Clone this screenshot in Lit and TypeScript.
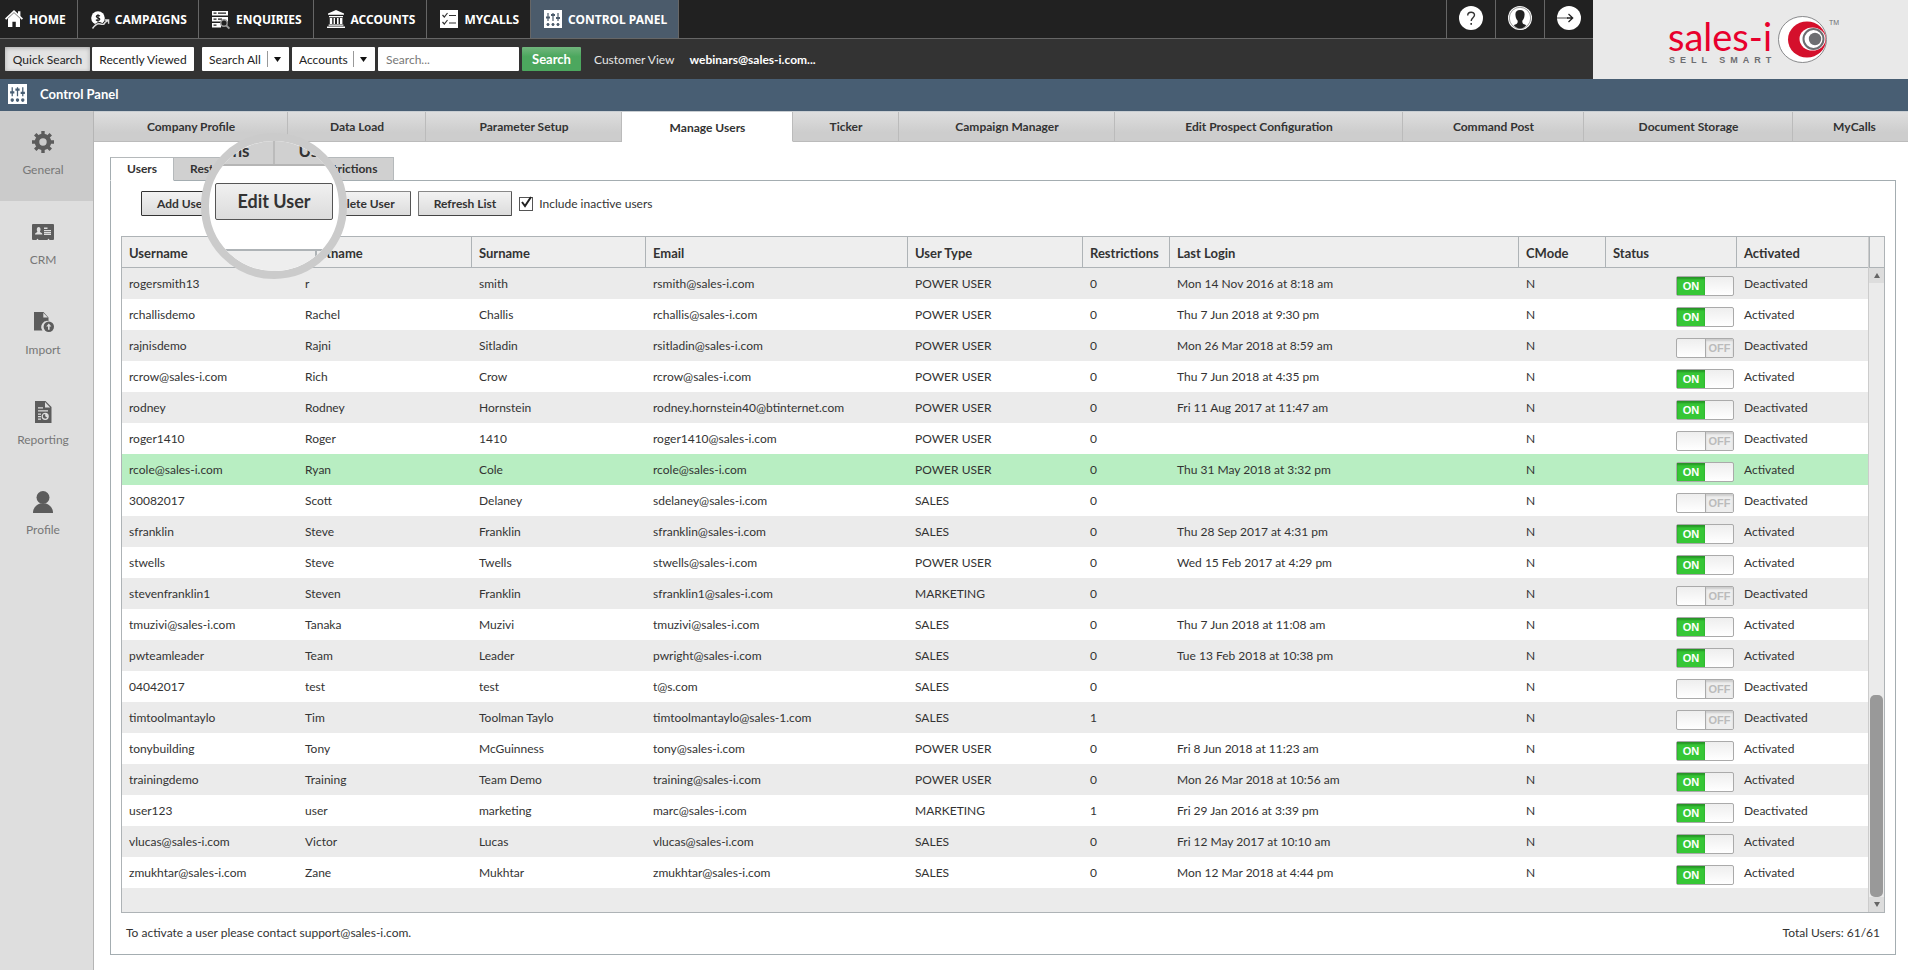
import { LitElement, html, css, svg } from "lit";
import { customElement } from "lit/decorators.js";
import { classMap } from "lit/directives/class-map.js";
import { styleMap } from "lit/directives/style-map.js";

const sliders = svg`
  <rect width="18" height="18" fill="#fff"/>
  <g class="ink"><path d="M4 3v8M9 3v8M14 3v8" stroke-width="1.2" fill="none"/>
  <path d="M2 7.5h4M7 5h4M12 8h4" stroke-width="2" fill="none"/>
  <circle cx="4" cy="14.5" r="1.1"/><circle cx="9" cy="14.5" r="1.1"/><circle cx="14" cy="14.5" r="1.1"/></g>`;

const navIcons: Record<string, unknown> = {
  home: svg`<path fill="#fff" d="M9 0L0 8.4l1.2 1.4L3 8.2V17h4.4v-5.2h3.4V17H15V8.2l1.8 1.6L18 8.4l-2.6-2.5V1.2H13v2.5z"/><path d="M2.600 8.600L9 2.600l6.400 6" fill="none" stroke="#212121" stroke-width=".6"/>`,
  campaigns: svg`<circle cx="7" cy="8" r="6.800" fill="#fff"/><path fill="none" stroke="#212121" stroke-width="1.200" d="M8.800 6.200C8.300 5 5.300 4.900 5.300 6.500S8.800 7.700 8.800 9.300 5.700 10.800 5 9.600M7 4.200v7.600"/><path fill="none" stroke="#212121" stroke-width="3" d="M4 16.500c2-3 4.500-3.500 6-2.500 2 1 3.500.5 4-1.500"/><path fill="none" stroke="#ddd" stroke-width="1.400" d="M1.500 18.500c3-4.500 5.500-5.500 8-4.500 2.500.8 4 .3 4.500-1.500l3.200-2.200M13.800 10h3.800v3.800"/>`,
  enquiries: svg`<path fill="#fff" d="M0 1h16v4.500H0zM0 7h16v4.500H0zM0 13h9v4.500H0z"/><path stroke="#212121" stroke-width="1.200" d="M1.500 3.200h3M6 3.200h8M1.500 9.200h3M6 9.200h4M1.500 15.200h3"/><circle cx="12" cy="13" r="3.200" fill="#212121" stroke="#999" stroke-width="1.400"/><path stroke="#999" stroke-width="2" d="M14.400 15.600l3 3"/>`,
  accounts: svg`<path fill="#fff" d="M9 0l8 3.600v1.200H1V3.600zM2 6h14v1.200H2zM2.800 8h2.400v6H2.800zM6.600 8H8v6H6.600zM10 8h1.600v6H10zM13 8h2.400v6H13zM1.600 14.600h14.800v1.200H1.600zM0 16.400h18V18H0z"/>`,
  mycalls: svg`<rect width="18" height="18" fill="#fff"/><path fill="none" stroke="#333" stroke-width="1.200" d="M2.500 5l1.800 2L7.500 3M9 5.500h7M2.500 12l1.800 2 3.200-4M9 13h7"/>`,
  panel: sliders,
};

const sideIcons: Record<string, unknown> = {
  general: svg`<g fill="#5c5c5c"><path d="M9.300 0h3.400v4H9.300zM9.300 18h3.400v4H9.300zM0 9.300h4v3.400H0zM18 9.300h4v3.400h-4z"/><g transform="rotate(45 11 11)"><path d="M9.300 0h3.400v4H9.300zM9.300 18h3.400v4H9.300zM0 9.300h4v3.400H0zM18 9.300h4v3.400h-4z"/></g></g><circle cx="11" cy="11" r="6" fill="none" stroke="#5c5c5c" stroke-width="4.600"/>`,
  crm: svg`<path fill="#5c5c5c" d="M1 3h20q1 0 1 1v14q0 1-1 1h-3.500q-1-2.600-2 0h-9q-1-2.600-2 0H1q-1 0-1-1V4q0-1 1-1z"/><path fill="#dedede" d="M3 13.500c0-2 2.200-1.800 2.400-3-1-1.300-.8-4.500 1.300-4.500s2.300 3.200 1.200 4.500c.2 1.200 2.500 1 2.500 3zM12 6.500h3.500v1.400H12zM12 9h7v1.200h-7zM12 11h7v1.200h-7zM12 12.800h7V14h-7z"/>`,
  import: svg`<path fill="#5c5c5c" d="M2 1h9.500l5 5.500V10a6 6 0 0 0-6 9.500H2z"/><path fill="#dedede" d="M11.300 1.800v4.800h4.600z"/><circle cx="16.800" cy="15.800" r="5.200" fill="#5c5c5c"/><path fill="#dedede" d="M16.800 12.600l2.600 2.800h-1.800v3.400H16v-3.400h-1.800z"/>`,
  reporting: svg`<path fill="#5c5c5c" d="M3 0h10.500L19.500 6v16H3z"/><path fill="#dedede" d="M13 1v5.400h5.200zM6 6.300h5v1.200H6zM6 9.300h10v1.200H6zM6 12.500h3v1.200H6zM6 15h3v1.200H6zM6 17.500h3v1.200H6z"/><circle cx="13.200" cy="15.300" r="3" fill="none" stroke="#dedede" stroke-width="1.200"/><path fill="#dedede" d="M13.200 15.300v-3a3 3 0 0 1 2.300 4.800z"/>`,
  profile: svg`<circle cx="11" cy="6.500" r="6.500" fill="#5c5c5c"/><path fill="#5c5c5c" d="M1 22c0-5 3-8 7-9.500h6c4 1.500 7 4.500 7 9.500z"/>`,
};

const nav = [
  ["home", "HOME"], ["campaigns", "CAMPAIGNS"], ["enquiries", "ENQUIRIES"],
  ["accounts", "ACCOUNTS"], ["mycalls", "MYCALLS"], ["panel", "CONTROL PANEL"],
];
const side = [["general", "General"], ["crm", "CRM"], ["import", "Import"], ["reporting", "Reporting"], ["profile", "Profile"]];
const tabs = ["Company Profile", "Data Load", "Parameter Setup", "Manage Users", "Ticker", "Campaign Manager",
  "Edit Prospect Configuration", "Command Post", "Document Storage", "MyCalls"];

const columns: [string, number][] = [
  ["Username", 175], ["Firstname", 174], ["Surname", 174], ["Email", 262], ["User Type", 175], ["Restrictions", 87],
  ["Last Login", 349], ["CMode", 87], ["Status", 131], ["Activated", 132],
];
const columnTotal = columns.reduce((sum, c) => sum + c[1], 0);

const P = "POWER USER", S = "SALES", M = "MARKETING";
type User = [string, string, string, string, string, number, string, boolean, boolean];
const users: User[] = [
  ["rogersmith13", "r", "smith", "rsmith@sales-i.com", P, 0, "Mon 14 Nov 2016 at 8:18 am", true, false],
  ["rchallisdemo", "Rachel", "Challis", "rchallis@sales-i.com", P, 0, "Thu 7 Jun 2018 at 9:30 pm", true, true],
  ["rajnisdemo", "Rajni", "Sitladin", "rsitladin@sales-i.com", P, 0, "Mon 26 Mar 2018 at 8:59 am", false, false],
  ["rcrow@sales-i.com", "Rich", "Crow", "rcrow@sales-i.com", P, 0, "Thu 7 Jun 2018 at 4:35 pm", true, true],
  ["rodney", "Rodney", "Hornstein", "rodney.hornstein40@btinternet.com", P, 0, "Fri 11 Aug 2017 at 11:47 am", true, false],
  ["roger1410", "Roger", "1410", "roger1410@sales-i.com", P, 0, "", false, false],
  ["rcole@sales-i.com", "Ryan", "Cole", "rcole@sales-i.com", P, 0, "Thu 31 May 2018 at 3:32 pm", true, true],
  ["30082017", "Scott", "Delaney", "sdelaney@sales-i.com", S, 0, "", false, false],
  ["sfranklin", "Steve", "Franklin", "sfranklin@sales-i.com", S, 0, "Thu 28 Sep 2017 at 4:31 pm", true, true],
  ["stwells", "Steve", "Twells", "stwells@sales-i.com", P, 0, "Wed 15 Feb 2017 at 4:29 pm", true, true],
  ["stevenfranklin1", "Steven", "Franklin", "sfranklin1@sales-i.com", M, 0, "", false, false],
  ["tmuzivi@sales-i.com", "Tanaka", "Muzivi", "tmuzivi@sales-i.com", S, 0, "Thu 7 Jun 2018 at 11:08 am", true, true],
  ["pwteamleader", "Team", "Leader", "pwright@sales-i.com", S, 0, "Tue 13 Feb 2018 at 10:38 pm", true, true],
  ["04042017", "test", "test", "t@s.com", S, 0, "", false, false],
  ["timtoolmantaylo", "Tim", "Toolman Taylo", "timtoolmantaylo@sales-1.com", S, 1, "", false, false],
  ["tonybuilding", "Tony", "McGuinness", "tony@sales-i.com", P, 0, "Fri 8 Jun 2018 at 11:23 am", true, true],
  ["trainingdemo", "Training", "Team Demo", "training@sales-i.com", P, 0, "Mon 26 Mar 2018 at 10:56 am", true, true],
  ["user123", "user", "marketing", "marc@sales-i.com", M, 1, "Fri 29 Jan 2016 at 3:39 pm", true, false],
  ["vlucas@sales-i.com", "Victor", "Lucas", "vlucas@sales-i.com", S, 0, "Fri 12 May 2017 at 10:10 am", true, true],
  ["zmukhtar@sales-i.com", "Zane", "Mukhtar", "zmukhtar@sales-i.com", S, 0, "Mon 12 Mar 2018 at 4:44 pm", true, true],
];

const base = css`
  * { box-sizing: border-box; }
  button, input, select { font: inherit; color: inherit; margin: 0; }
  a { color: inherit; text-decoration: none; }
  svg { display: block; flex: none; overflow: visible; }
`;

@customElement("app-header")
export class AppHeader extends LitElement {
  static styles = [base, css`
    :host { display: block; color: #fff; }
    .top { display: flex; }
    .bars { flex: 1; min-width: 0; }
    .nav { display: flex; height: 39px; background: #212121; border-bottom: 1px solid #666; }
    .item { display: flex; align-items: center; gap: 6px; padding: 0 11px 0 13px; border-right: 1px solid #666;
      font: bold 12px "Noto Sans", sans-serif; white-space: nowrap; }
    .item:first-child { padding-left: 5px; }
    .item.current { background: #4b5b6b; }
    .ink { fill: #4b5b6b; stroke: #4b5b6b; }
    .spacer { flex: 1; }
    .round { width: 49px; display: flex; justify-content: center; padding: 6px 0 0; border: 0; border-left: 1px solid #666; background: none; }
    .search { display: flex; align-items: center; height: 40px; padding: 0 5px; background: #333; font: 12px "Lato", sans-serif; }
    .chip { height: 24px; padding: 0; border: 0; border-radius: 1px; background: #fff; color: #222; }
    .quick { width: 85px; background: #e3e3e3; margin-right: 2px; box-shadow: inset 0 1px 4px #aaa; }
    .recent { width: 102px; margin-right: 8px; }
    .pick { position: relative; display: block; height: 24px; margin-right: 3px; }
    .pick select { appearance: none; width: 100%; height: 24px; padding: 0 0 0 7px; border: 0; border-radius: 1px; background: #fff; color: #222; }
    .pick svg { position: absolute; right: 0; top: 0; pointer-events: none; }
    .all { width: 87px; }
    .acc { width: 83px; }
    .query { width: 141px; padding: 0 8px; margin-right: 3px; }
    .query::placeholder { color: #777; opacity: 1; }
    .go { width: 59px; background: linear-gradient(#71b67d, #4ca75e 40%); color: #fff; font-weight: bold; font-size: 13px; margin-right: 13px; }
    .view { margin-right: 15px; color: #e6e6e6; }
    .who { font-weight: bold; }
    .brand { width: 315px; background: #e9e9e9; padding: 12px 0 0 72px; }
    .title { display: flex; align-items: center; gap: 13px; height: 32px; padding: 0 8px 2px; margin: 0; background: #485e73; font: bold 13px "Lato", sans-serif; }
    .title .ink { fill: #485e73; stroke: #485e73; }
  `];

  render() {
    const arrow = svg`<path d="M2.500 4v16" stroke="#999"/><path d="M9 10h7l-3.500 5z" fill="#111"/>`;
    return html`
      <header>
        <div class="top">
          <div class="bars">
            <nav class="nav">
              ${nav.map(([icon, label], i) => html`<a href="#${icon}" class=${classMap({ item: true, current: i === 5 })}>
                <svg width="18" height="18" viewBox="0 0 18 18">${navIcons[icon]}</svg>${label}</a>`)}
              <span class="spacer"></span>
              <button class="round" aria-label="Help"><svg width="24" height="24" viewBox="0 0 24 24"><circle cx="12" cy="12" r="12" fill="#fff"/><path d="M8.700 9.500c0-4.300 6.800-4.300 6.800-.5 0 2.700-3.300 2.800-3.300 6" fill="none" stroke="#333" stroke-width="1.400"/><rect x="11.400" y="17" width="1.600" height="1.800" fill="#333"/></svg></button>
              <button class="round" aria-label="Profile"><svg width="24" height="24" viewBox="0 0 24 24"><circle cx="12" cy="12" r="12" fill="#fff"/><circle cx="12" cy="12" r="10.700" fill="none" stroke="#555" stroke-width=".6"/><path fill="#212121" d="M12 4c-3.600 0-5 2.300-4.500 5.500.2 2.500 1 4 2.200 5.200 0 2.600-.5 3.300-4 4.300 3 4.500 9.600 4.500 12.600 0-3.500-1-4-1.700-4-4.300 1.200-1.200 2-2.700 2.200-5.200C17 6.300 15.600 4 12 4z"/></svg></button>
              <button class="round" aria-label="Log out"><svg width="24" height="24" viewBox="0 0 24 24"><circle cx="12" cy="12" r="12" fill="#fff"/><path d="M0 12h11" stroke="#999" stroke-width="1.800"/><path d="M10 12h6M11.500 8l4.200 4-4.200 4" fill="none" stroke="#222" stroke-width="1.300"/></svg></button>
            </nav>
            <div class="search">
              <button class="chip quick">Quick Search</button>
              <button class="chip recent">Recently Viewed</button>
              <label class="pick all"><select aria-label="Search scope"><option>Search All</option></select><svg width="24" height="24">${arrow}</svg></label>
              <label class="pick acc"><select aria-label="Record type"><option>Accounts</option></select><svg width="24" height="24">${arrow}</svg></label>
              <input class="chip query" type="text" aria-label="Search" placeholder="Search...">
              <button class="chip go">Search</button>
              <span class="view">Customer View</span>
              <span class="who">webinars@sales-i.com...</span>
            </div>
          </div>
          <div class="brand">
            <svg width="180" height="56" viewBox="0 0 180 56" role="img" aria-label="sales-i Sell Smart">
              <text x="3" y="39" font-family="Lato" font-size="38" fill="#e8002d">sales-i</text>
              <text x="4" y="51" font-family="Liberation Sans" font-weight="bold" font-size="9" letter-spacing="5" fill="#6d6e71">SELL SMART</text>
              <ellipse cx="137.500" cy="27.500" rx="24" ry="23" fill="#fff" stroke="#6d6e71" stroke-width=".8"/>
              <ellipse cx="142" cy="27.500" rx="19" ry="18" fill="#d4102c"/>
              <ellipse cx="147.500" cy="27" rx="13" ry="11.500" fill="#fff"/>
              <circle cx="148.500" cy="27" r="10" fill="none" stroke="#6d6e71" stroke-width="2"/>
              <circle cx="150" cy="27" r="6.200" fill="#6d6e71"/>
              <text x="164" y="13" font-family="Liberation Sans" font-size="7" fill="#6d6e71">TM</text>
            </svg>
          </div>
        </div>
        <h1 class="title"><svg width="19" height="20" viewBox="0 0 18 18" preserveAspectRatio="none">${sliders}</svg>Control Panel</h1>
      </header>`;
  }
}

@customElement("user-table")
export class UserTable extends LitElement {
  static styles = [base, css`
    :host { display: flex; border: 1px solid #aeb3b6; background: #ebebeb; color: #333; }
    table { flex: 1; border-collapse: separate; border-spacing: 0; table-layout: fixed; width: 0; }
    th { height: 31px; padding: 2px 7px 0; text-align: left; font-size: 13px; font-weight: bold; background: #eee;
      border-bottom: 1px solid #aeb3b6; border-left: 1px solid #aeb3b6; }
    th:first-child { border-left: 0; }
    td { height: 31px; padding: 0 8px; white-space: nowrap; overflow: hidden; background: #ebebeb; font-size: 12px; }
    td:first-child { padding-left: 7px; }
    tr:nth-child(even) td { background: #fff; }
    tr.selected td { background: #b8eec2; }
    tr.filler td { height: 24px; background: #ebebeb; }
    td.status { padding: 5px 2px 0 0; }
    .switch { position: relative; display: flex; width: 58px; height: 20px; margin-left: auto; border: 1px solid #aaa; border-radius: 2px;
      font: bold 11px "Liberation Sans", sans-serif; line-height: 18px; text-align: center; background: linear-gradient(#eee, #fff); }
    .switch input { position: absolute; inset: 0; width: 100%; height: 100%; opacity: 0; }
    .face { width: 28px; color: #fff; background: #36c736; box-shadow: inset 0 2px 2px #279427; }
    .off { justify-content: flex-end; }
    .off .face { color: #bbb; background: #eee; box-shadow: inset 0 2px 2px #ccc; border-left: 1px solid #aaa; }
    .scroll { width: 16px; display: flex; flex-direction: column; border-left: 1px solid #ccc; }
    .cap { height: 31px; border-bottom: 1px solid #aeb3b6; border-left: 1px solid #aeb3b6; background: #eee; }
    .step { display: grid; place-items: center; height: 15px; padding: 0; border: 0; background: #ddd; }
    .track { flex: 1; display: flex; flex-direction: column; padding: 0 1px; }
    .gap { flex: 413; }
    .thumb { flex: 202; border-radius: 5px; background: #999; }
  `];

  render() {
    return html`
      <table>
        <colgroup>${columns.map(([, w]) => html`<col style=${styleMap({ width: `${(w / columnTotal) * 100}%` })}>`)}</colgroup>
        <thead><tr>${columns.map(([name]) => html`<th scope="col">${name}</th>`)}</tr></thead>
        <tbody>
          ${users.map((u, i) => html`<tr class=${classMap({ selected: i === 6 })}>
            ${u.slice(0, 7).map((v) => html`<td>${v}</td>`)}<td>N</td>
            <td class="status"><label class=${classMap({ switch: true, off: !u[7] })}>
              <input type="checkbox" aria-label="Status of ${u[0]}" .checked=${u[7]}><span class="face">${u[7] ? "ON" : "OFF"}</span></label></td>
            <td>${u[8] ? "Activated" : "Deactivated"}</td></tr>`)}
          <tr class="filler"><td colspan="10"></td></tr>
        </tbody>
      </table>
      <div class="scroll">
        <div class="cap"></div>
        <button class="step" aria-label="Scroll up"><svg width="6" height="5"><path d="M0 5h6L3 0z" fill="#666"/></svg></button>
        <div class="track"><div class="gap"></div><div class="thumb"></div></div>
        <button class="step" aria-label="Scroll down"><svg width="6" height="5"><path d="M0 0h6L3 5z" fill="#666"/></svg></button>
      </div>`;
  }
}

@customElement("app-root")
export class AppRoot extends LitElement {
  static styles = [base, css`
    :host { display: flex; flex-direction: column; min-height: 100vh; background: #fff; color: #333; font: 12px/16px "Lato", sans-serif; }
    .body { flex: 1; display: flex; }
    .side { width: 94px; background: #dedede; border-right: 1px solid #b5b5b5; }
    .side a { display: flex; flex-direction: column; align-items: center; gap: 9px; height: 90px; padding: 20px 7px 0 0; color: #777; }
    .side a.current { background: #cbcbcb; }
    main { flex: 1; min-width: 0; }
    .tabs { display: grid; grid-template-columns: 194fr 138fr 196fr 171fr 106fr 216fr 288fr 181fr 209fr 115fr; height: 31px;
      border-top: 1px solid #c9ced2; }
    .tab { display: grid; place-items: center; padding-left: 1px; background: linear-gradient(#dedede, #cdcdcd 70%); border-right: 1px solid #bbb; border-bottom: 1px solid #bbb;
      font-weight: bold; white-space: nowrap; }
    .tab:last-child { border-right: 0; padding-left: 8px; }
    .tab.current { background: #fff; border-bottom-color: #fff; padding-top: 2px; }
    .content { position: relative; padding: 15px 12px 15px 16px; }
    .subtabs { display: flex; height: 24px; margin-bottom: -1px; position: relative; }
    .sub { display: grid; place-items: center; padding: 0 16px; border: 1px solid #b5b9bb; border-left: 0; border-bottom-color: #a4adb1; background: #d0d0d0; font-weight: bold; }
    .sub.current { border-left: 1px solid #a4adb1; background: #fff; border-bottom-color: #fff; }
    .panel { border: 1px solid #a4adb1; padding: 10px 10px 0; }
    .tools { display: flex; align-items: center; gap: 7px; padding: 0 0 0 20px; height: 25px; margin-bottom: 20px; }
    .btn { height: 25px; padding: 0 15px; border: 1px solid #555; border-color: #888 #555 #444 #777; border-radius: 1px;
      background: linear-gradient(#f2f2f2, #dcdcdc); font-weight: bold; }
    .btn.primary { border-color: #333; }
    .btn.covered { visibility: hidden; padding: 0 14px; }
    .check { display: flex; align-items: center; gap: 6px; }
    .check input { appearance: none; width: 14px; height: 14px; border: 1px solid #555; position: relative; background: #fff; }
    .check svg { position: absolute; margin: -2px 0 0 2px; pointer-events: none; }
    .foot { display: flex; justify-content: space-between; padding: 12px 5px; }
    .foot p { margin: 0; height: 17px; }
    .lens { position: absolute; left: 107px; top: -9px; width: 146px; height: 146px; border: 8px solid #cbcbcb; border-radius: 50%;
      overflow: hidden; background: #fff; }
    .lens-tabs { display: flex; height: 25px; background: #d0d0d0; border-bottom: 2px solid #b5b5b5; font: bold 17px/20px "Lato", sans-serif; }
    .lens-tabs span { flex: 1; }
    .lens-tabs span:first-child { text-align: right; padding-right: 23px; border-right: 2px solid #bbb; }
    .lens-tabs span:last-child { padding-left: 24px; }
    .lens-btn { display: block; width: 118px; height: 37px; padding: 0 0 2px; margin: 17px 0 0 6px; border: 1px solid #555; border-radius: 2px;
      background: linear-gradient(#f0f0f0, #dcdcdc); font: bold 18px "Lato", sans-serif; }
    .lens-head { height: 40px; margin-top: 29px; border-top: 2px solid #aeb3b6; background: #eee; }
    .lens-rule { width: 108px; height: 100%; border-right: 2px solid #aeb3b6; }
  `];

  render() {
    return html`
      <app-header></app-header>
      <div class="body">
        <nav class="side">
          ${side.map(([icon, label], i) => html`<a href="#${icon}" class=${classMap({ current: i === 0 })}>
            <svg width="22" height="22" viewBox="0 0 22 22">${sideIcons[icon]}</svg>${label}</a>`)}
        </nav>
        <main>
          <nav class="tabs">${tabs.map((t, i) => html`<a href="#tab${i}" class=${classMap({ tab: true, current: i === 3 })}>${t}</a>`)}</nav>
          <div class="content">
            <nav class="subtabs">
              <a href="#users" class="sub current">Users</a>
              <a href="#restrictions" class="sub">Restrictions</a>
              <a href="#user-restrictions" class="sub">User Restrictions</a>
            </nav>
            <section class="panel">
              <div class="tools">
                <button class="btn primary">Add User</button>
                <button class="btn covered">Edit User</button>
                <button class="btn">Delete User</button>
                <button class="btn">Refresh List</button>
                <label class="check"><input type="checkbox" checked><svg width="11" height="13"><path d="M1 6l3 4 6-9" fill="none" stroke="#222" stroke-width="2"/></svg>Include inactive users</label>
              </div>
              <user-table></user-table>
              <div class="foot"><p>To activate a user please contact support@sales-i.com.</p><p>Total Users: 61/61</p></div>
            </section>
            <div class="lens">
              <div class="lens-tabs"><span>ns</span><span>Us</span></div>
              <button class="lens-btn">Edit User</button>
              <div class="lens-head"><div class="lens-rule"></div></div>
            </div>
          </div>
        </main>
      </div>`;
  }
}
